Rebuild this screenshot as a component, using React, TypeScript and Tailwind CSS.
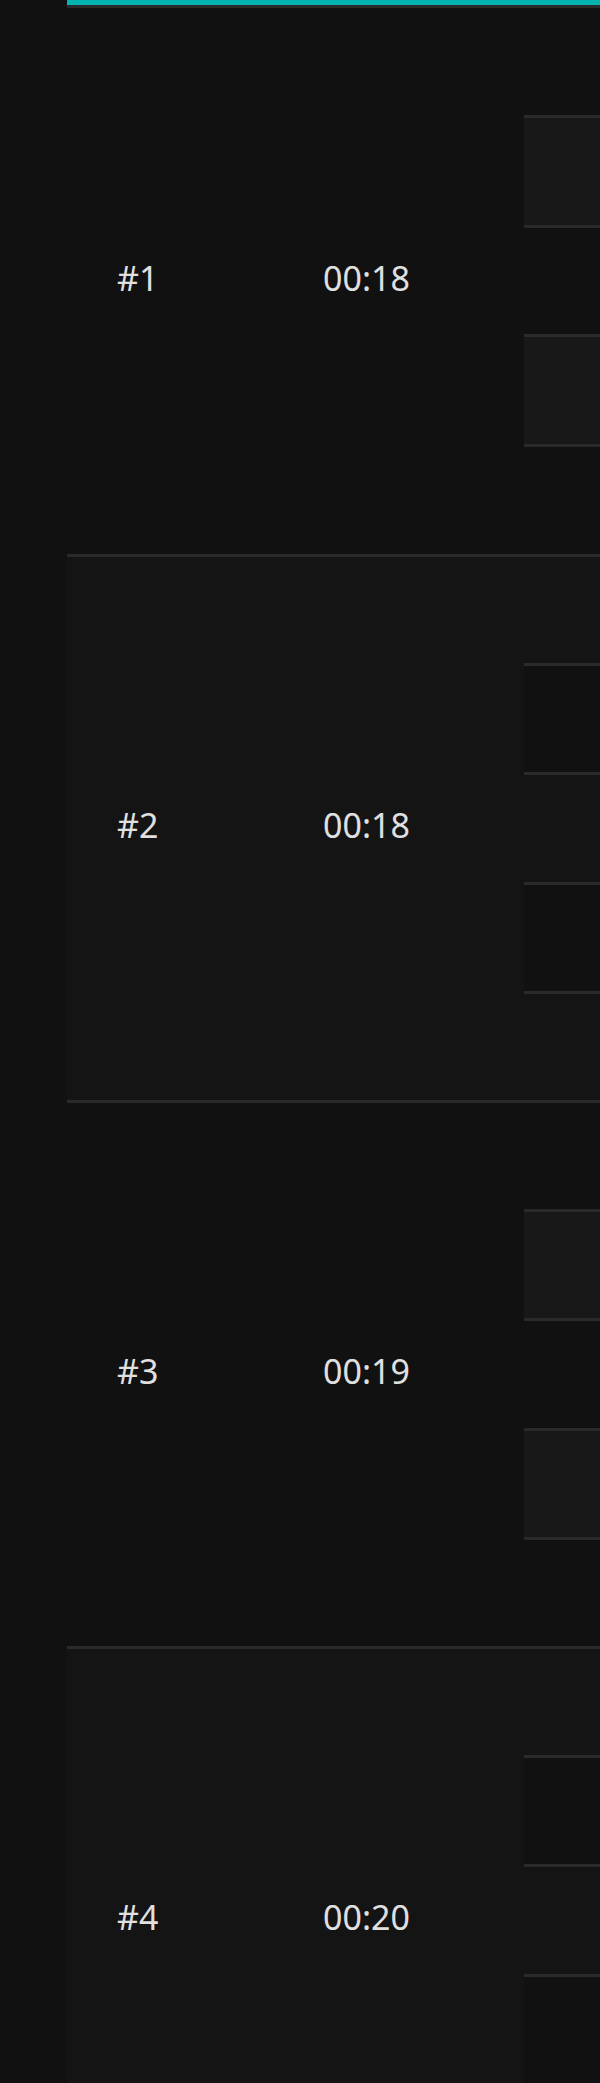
import React from "react";

const rows = [
  { n: "#1", t: "00:18" },
  { n: "#2", t: "00:18" },
  { n: "#3", t: "00:19" },
  { n: "#4", t: "00:20" },
];

function Row({ n, t, idx }: { n: string; t: string; idx: number }) {
  const odd = idx % 2 === 1;
  return (
    <div
      className={
        "flex h-[546px] shrink-0 " +
        (idx === 0 ? "" : "border-t-[3px] border-[#2a2a2a] ") +
        (odd ? "bg-[#141414]" : "bg-[#111111]")
      }
    >
      <div className="flex w-[206px] shrink-0 items-center pb-[6px] pl-[50px]">
        <span>{n}</span>
      </div>
      <div className="flex w-[251px] shrink-0 items-center pb-[6px] pl-[50px]">
        <span>{t}</span>
      </div>
      <div className="flex flex-1 flex-col">
        {[0, 1, 2, 3, 4].map((k) => (
          <div
            key={k}
            className={
              "flex-1 " +
              (k % 2 === 1
                ? "border-y-[3px] border-[#2a2a2a] " + (odd ? "bg-[#111111]" : "bg-[#181818]")
                : "")
            }
          />
        ))}
      </div>
    </div>
  );
}

export default function App() {
  return (
    <div
      className="flex h-[2083px] w-[600px] overflow-hidden bg-[#111111] text-[34px] text-[#e0e0e0]"
      style={{ fontFamily: '"Noto Sans", "Open Sans", sans-serif' }}
    >
      <div className="w-[67px] shrink-0 bg-[#111111]" />
      <div className="flex flex-1 flex-col">
        <div className="h-[5px] shrink-0 bg-[#03b3b0]" />
        <div className="h-[3px] shrink-0 bg-[#2a2a2a]" />
        {rows.map((r, i) => (
          <Row key={i} n={r.n} t={r.t} idx={i} />
        ))}
      </div>
    </div>
  );
}
